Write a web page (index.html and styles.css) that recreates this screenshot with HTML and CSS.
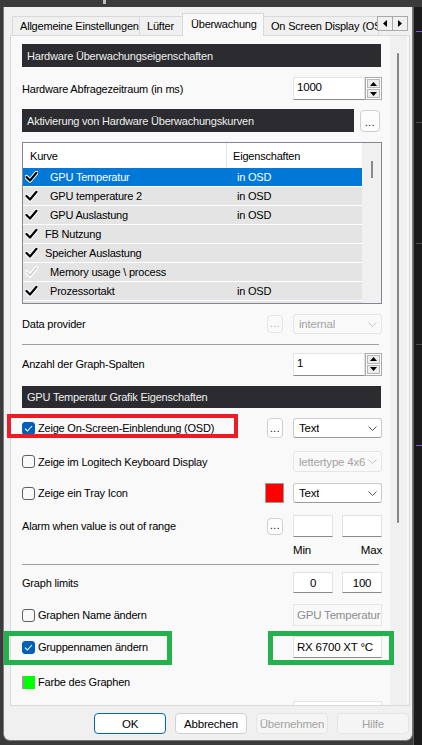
FILE: index.html
```html
<!DOCTYPE html>
<html>
<head>
<meta charset="utf-8">
<title>Überwachung</title>
<link rel="stylesheet" href="styles.css">
</head>
<body>
<div class="titlebar"><span class="tick"></span></div>
<div class="main">
  <div class="dialog">
    <div class="tabs">
      <div class="tab t1">Allgemeine Einstellungen</div>
      <div class="tab t2">Lüfter</div>
      <div class="tab t3 active">Überwachung</div>
      <div class="tab t4">On Screen Display (OS</div>
      <div class="tabarrows">
        <span class="tabarrow"><svg width="4" height="7" viewBox="0 0 4 7"><path d="M4 0 L0 3.5 L4 7Z"/></svg></span>
        <span class="tabarrow"><svg width="4" height="7" viewBox="0 0 4 7"><path d="M0 0 L4 3.5 L0 7Z"/></svg></span>
      </div>
    </div>
    <div class="panel">
      <div class="content">
        <div class="hdr r-hdr1">Hardware Überwachungseigenschaften</div>

        <div class="row r-poll">
          <span class="lbl">Hardware Abfragezeitraum (in ms)</span>
          <div class="spin">
            <span class="field">1000</span>
            <span class="spinbtns">
              <span class="sb"><svg width="7" height="4" viewBox="0 0 7 4"><path d="M0 4 L3.5 0 L7 4Z"/></svg></span>
              <span class="sb"><svg width="7" height="4" viewBox="0 0 7 4"><path d="M0 0 L3.5 4 L7 0Z"/></svg></span>
            </span>
          </div>
        </div>

        <div class="row r-hdr2">
          <div class="hdr hdr-grow">Aktivierung von Hardware Überwachungskurven</div>
          <span class="dots big">...</span>
        </div>

        <div class="list">
          <div class="list-body">
            <div class="list-head"><span class="col1">Kurve</span><span class="col2">Eigenschaften</span></div>
            <div class="item sel">
              <svg class="chk" width="13" height="12" viewBox="0 0 13 12"><path d="M1.5 6 L5 9.5 L11.5 1.8" fill="none" stroke="#fff" stroke-width="4.2" stroke-linecap="round" stroke-linejoin="round"/><path d="M1.5 6 L5 9.5 L11.5 1.8" fill="none" stroke="#000" stroke-width="2.2" stroke-linecap="round" stroke-linejoin="round"/></svg>
              <span class="name">GPU Temperatur</span><span class="prop">in OSD</span>
            </div>
            <div class="item">
              <svg class="chk" width="13" height="12" viewBox="0 0 13 12"><path d="M1.5 6 L5 9.5 L11.5 1.8" fill="none" stroke="#fff" stroke-width="4.2" stroke-linecap="round" stroke-linejoin="round"/><path d="M1.5 6 L5 9.5 L11.5 1.8" fill="none" stroke="#000" stroke-width="2.2" stroke-linecap="round" stroke-linejoin="round"/></svg>
              <span class="name">GPU temperature 2</span><span class="prop">in OSD</span>
            </div>
            <div class="item">
              <svg class="chk" width="13" height="12" viewBox="0 0 13 12"><path d="M1.5 6 L5 9.5 L11.5 1.8" fill="none" stroke="#fff" stroke-width="4.2" stroke-linecap="round" stroke-linejoin="round"/><path d="M1.5 6 L5 9.5 L11.5 1.8" fill="none" stroke="#000" stroke-width="2.2" stroke-linecap="round" stroke-linejoin="round"/></svg>
              <span class="name">GPU Auslastung</span><span class="prop">in OSD</span>
            </div>
            <div class="item">
              <svg class="chk" width="13" height="12" viewBox="0 0 13 12"><path d="M1.5 6 L5 9.5 L11.5 1.8" fill="none" stroke="#fff" stroke-width="4.2" stroke-linecap="round" stroke-linejoin="round"/><path d="M1.5 6 L5 9.5 L11.5 1.8" fill="none" stroke="#000" stroke-width="2.2" stroke-linecap="round" stroke-linejoin="round"/></svg>
              <span class="name shift">FB Nutzung</span><span class="prop"></span>
            </div>
            <div class="item">
              <svg class="chk" width="13" height="12" viewBox="0 0 13 12"><path d="M1.5 6 L5 9.5 L11.5 1.8" fill="none" stroke="#fff" stroke-width="4.2" stroke-linecap="round" stroke-linejoin="round"/><path d="M1.5 6 L5 9.5 L11.5 1.8" fill="none" stroke="#000" stroke-width="2.2" stroke-linecap="round" stroke-linejoin="round"/></svg>
              <span class="name shift">Speicher Auslastung</span><span class="prop"></span>
            </div>
            <div class="item">
              <svg class="chk" width="13" height="12" viewBox="0 0 13 12"><path d="M1.5 6 L5 9.5 L11.5 1.8" fill="none" stroke="#fff" stroke-width="4.2" stroke-linecap="round" stroke-linejoin="round"/><path d="M1.5 6 L5 9.5 L11.5 1.8" fill="none" stroke="#cfcfcf" stroke-width="1.6" stroke-linecap="round" stroke-linejoin="round"/></svg>
              <span class="name">Memory usage \ process</span><span class="prop"></span>
            </div>
            <div class="item">
              <svg class="chk" width="13" height="12" viewBox="0 0 13 12"><path d="M1.5 6 L5 9.5 L11.5 1.8" fill="none" stroke="#fff" stroke-width="4.2" stroke-linecap="round" stroke-linejoin="round"/><path d="M1.5 6 L5 9.5 L11.5 1.8" fill="none" stroke="#000" stroke-width="2.2" stroke-linecap="round" stroke-linejoin="round"/></svg>
              <span class="name">Prozessortakt</span><span class="prop">in OSD</span>
            </div>
            <div class="item">
              <svg class="chk" width="13" height="12" viewBox="0 0 13 12"><path d="M1.5 6 L5 9.5 L11.5 1.8" fill="none" stroke="#fff" stroke-width="4.2" stroke-linecap="round" stroke-linejoin="round"/><path d="M1.5 6 L5 9.5 L11.5 1.8" fill="none" stroke="#000" stroke-width="2.2" stroke-linecap="round" stroke-linejoin="round"/></svg>
            </div>
          </div>
          <div class="list-scroll"><span class="list-thumb"></span></div>
        </div>

        <div class="row r-prov">
          <span class="lbl">Data provider</span>
          <span class="dots small disabled">...</span>
          <div class="select disabled"><span class="val">internal</span><svg width="9" height="5" viewBox="0 0 9 5"><path d="M0.5 0.5 L4.5 4.5 L8.5 0.5" fill="none" stroke="#c4c4c4"/></svg></div>
        </div>

        <div class="sep r-sep1"></div>

        <div class="row r-cols">
          <span class="lbl">Anzahl der Graph-Spalten</span>
          <div class="spin spin-s">
            <span class="field">1</span>
            <span class="spinbtns">
              <span class="sb"><svg width="7" height="4" viewBox="0 0 7 4"><path d="M0 4 L3.5 0 L7 4Z"/></svg></span>
              <span class="sb"><svg width="7" height="4" viewBox="0 0 7 4"><path d="M0 0 L3.5 4 L7 0Z"/></svg></span>
            </span>
          </div>
        </div>

        <div class="hdr r-hdr3">GPU Temperatur Grafik Eigenschaften</div>

        <div class="row r-osd">
          <span class="lbl"><span class="cb checked"><svg width="9" height="7" viewBox="0 0 9 7"><path d="M1 3.6 L3.4 6 L8 1" fill="none" stroke="#fff" stroke-width="1.1"/></svg></span>Zeige On-Screen-Einblendung (OSD)</span>
          <span class="dots mid">...</span>
          <div class="select"><span class="val">Text</span><svg width="9" height="5" viewBox="0 0 9 5"><path d="M0.5 0.5 L4.5 4.5 L8.5 0.5" fill="none" stroke="#555"/></svg></div>
        </div>

        <div class="row r-logi">
          <span class="lbl"><span class="cb"></span>Zeige im Logitech Keyboard Display</span>
          <div class="select disabled"><span class="val">lettertype 4x6</span><svg width="9" height="5" viewBox="0 0 9 5"><path d="M0.5 0.5 L4.5 4.5 L8.5 0.5" fill="none" stroke="#c4c4c4"/></svg></div>
        </div>

        <div class="row r-tray">
          <span class="lbl"><span class="cb"></span>Zeige ein Tray Icon</span>
          <span class="swatch-red"></span>
          <div class="select"><span class="val">Text</span><svg width="9" height="5" viewBox="0 0 9 5"><path d="M0.5 0.5 L4.5 4.5 L8.5 0.5" fill="none" stroke="#555"/></svg></div>
        </div>

        <div class="row r-alarm">
          <span class="lbl">Alarm when value is out of range</span>
          <span class="dots tiny">...</span>
          <span class="box"></span>
          <span class="box gapl"></span>
        </div>
        <div class="row r-minmax">
          <span class="lbl"></span>
          <span class="mm">Min</span>
          <span class="mm right">Max</span>
        </div>

        <div class="sep r-sep2"></div>

        <div class="row r-limits">
          <span class="lbl">Graph limits</span>
          <span class="box num">0</span>
          <span class="box num gapl">100</span>
        </div>

        <div class="row r-gname">
          <span class="lbl"><span class="cb"></span>Graphen Name ändern</span>
          <span class="input disabled">GPU Temperatur</span>
        </div>

        <div class="row r-grp">
          <span class="lbl"><span class="cb checked"><svg width="9" height="7" viewBox="0 0 9 7"><path d="M1 3.6 L3.4 6 L8 1" fill="none" stroke="#fff" stroke-width="1.1"/></svg></span>Gruppennamen ändern</span>
          <span class="input">RX 6700 XT °C</span>
        </div>

        <div class="row r-color">
          <span class="lbl"><span class="swatch-green"></span>Farbe des Graphen</span>
        </div>

        <div class="row r-next">
          <span class="lbl"></span>
          <span class="input"></span>
        </div>
      </div>
      <div class="vscroll"><span class="vthumb"></span></div>
    </div>
    <div class="buttons">
      <span class="btn default">OK</span>
      <span class="btn">Abbrechen</span>
      <span class="btn disabled">Übernehmen</span>
      <span class="btn disabled">Hilfe</span>
    </div>
  </div>
  <div class="side">
    <span class="side-line purple"></span>
    <span class="side-line s2"></span>
    <span class="side-line s3"></span>
    <span class="side-line s4"></span>
    <span class="side-line purple s5"></span>
  </div>
</div>

<div class="mark mark-red"></div>
<div class="mark mark-green1"></div>
<div class="mark mark-green2"></div>
</body>
</html>
```
FILE: styles.css
```css
* { box-sizing: border-box; }
html, body { margin: 0; padding: 0; }
body {
  width: 422px;
  height: 745px;
  overflow: hidden;
  background: #1e1e1e;
  font-family: "Liberation Sans", Arial, sans-serif;
  font-size: 11px;
  letter-spacing: -0.2px;
  color: #000;
  position: relative;
}

.titlebar { height: 7px; background: #3b3b3b; display: flex; }
.tick { width: 3px; height: 4px; background: #bdbdbd; margin-left: 103px; margin-top: 0; }

.main { display: flex; padding-left: 3px; background: #3b3b3b; height: 738px; }

.dialog {
  width: 410px;
  height: 734px;
  background: #f0f0f0;
  border-left: 1px solid #7a7a7a;
  border-right: 1px solid #7a7a7a;
  border-bottom: 1px solid #7a7a7a;
  border-radius: 0 0 7px 7px;
  padding-left: 6px;
  display: flex;
  flex-direction: column;
}

/* Tabs */
.tabs { display: flex; align-items: flex-end; height: 22px; margin-top: 6px; padding-left: 2px; position: relative; }
.tab {
  height: 19px;
  border: 1px solid #d9d9d9;
  border-bottom: none;
  margin-right: -1px;
  background: #f0f0f0;
  line-height: 18px;
  white-space: nowrap;
  overflow: hidden;
  padding-left: 7px;
}
.t1 { width: 128px; }
.t2 { width: 44px; }
.t3 { width: 82px; }
.t4 { width: 116px; }
.tab.active { height: 23px; margin-bottom: -1px; background: #f9f9f9; position: relative; z-index: 1; line-height: 20px; padding-left: 8px; }
.tabarrows { display: flex; align-self: flex-start; margin-top: 3px; margin-left: -1px; position: relative; z-index: 2; }
.tabarrow {
  width: 16px; height: 15px;
  border: 1px solid #a9a9a9;
  background: #f0f0f0;
  display: flex; align-items: center; justify-content: center;
  margin-right: -1px;
}
.tabarrow svg { fill: #000; }

/* Panel */
.panel {
  width: 400px;
  height: 671px;
  border: 1px solid #d9d9d9;
  background: #f9f9f9;
  display: flex;
}
.content { width: 379px; height: 669px; overflow: hidden; padding: 0 8px 0 11px; }
.vscroll { width: 17px; height: 669px; background: #f0f0f0; padding-top: 17px; padding-left: 7px; }
.vthumb { display: block; width: 2px; height: 470px; background: #858585; border-radius: 1px; }

/* Generic rows */
.row { display: flex; align-items: center; }
.lbl { flex: 1; display: flex; align-items: center; white-space: nowrap; }

.hdr { background: #2c2c30; color: #efefef; height: 23px; display: flex; align-items: center; padding-left: 5px; margin-right: 1px; }
.hdr-grow { flex: 1; margin-right: 0; }

.r-hdr1 { margin-top: 8px; }
.r-poll { margin-top: 10px; height: 23px; }
.r-hdr2 { margin-top: 9px; height: 23px; }
.list { margin-top: 10px; }
.r-prov { margin-top: 10px; height: 20px; }
.r-sep1 { margin-top: 10px; }
.r-cols { margin-top: 8px; height: 22px; }
.r-hdr3 { margin-top: 11px; height: 22px; }
.r-osd { margin-top: 10px; height: 20px; }
.r-logi { margin-top: 13px; height: 21px; }
.r-tray { margin-top: 11px; height: 20px; }
.r-alarm { margin-top: 12px; height: 22px; }
.r-minmax { margin-top: 6px; height: 14px; }
.r-sep2 { margin-top: 7px; }
.r-limits { margin-top: 7px; height: 21px; }
.r-gname { margin-top: 11px; height: 22px; }
.r-grp { margin-top: 10px; height: 22px; }
.r-color { margin-top: 17px; height: 14px; }
.r-next { margin-top: 12px; height: 22px; }

.sep { height: 1px; background: #a0a0a0; margin-right: 3px; }

/* Spin boxes */
.spin { display: flex; width: 89px; height: 23px; }
.spin .field {
  flex: 1;
  background: #fff;
  border: 1px solid #e3e3e3;
  border-bottom: 1px solid #8a8a8a;
  padding: 3px 0 0 3px;
  font-size: 11.5px;
}
.spinbtns { width: 17px; display: flex; flex-direction: column; border: 1px solid #a9a9a9; background: #fff; padding: 1px; gap: 1px; }
.sb { flex: 1; background: #ececec; border: 1px solid #b5b5b5; display: flex; align-items: center; justify-content: center; }
.sb svg { fill: #000; }

/* "..." buttons */
.dots {
  display: flex; align-items: flex-end; justify-content: center;
  border: 1px solid #cfcfcf;
  border-radius: 4px;
  background: #fdfdfd;
  font-size: 10px;
  line-height: 1;
  padding-bottom: 3px;
  letter-spacing: 0.5px;
}
.dots.big { width: 20px; height: 22px; margin-left: 6px; margin-right: 2px; }
.dots.small { width: 16px; height: 18px; margin-right: 10px; }
.dots.mid { width: 16px; height: 20px; margin-right: 10px; }
.dots.tiny { width: 16px; height: 17px; margin-right: 10px; }
.dots.disabled { color: #a8a8a8; border-color: #e6e6e6; background: #f9f9f9; }

/* Selects */
.select {
  width: 89px; height: 100%;
  display: flex; align-items: center; justify-content: space-between;
  background: #fff;
  border: 1px solid #cccccc;
  border-bottom-color: #9a9a9a;
  border-radius: 3px;
  padding: 0 4px 0 5px;
  font-size: 11.5px;
  white-space: nowrap;
}
.select .val { white-space: nowrap; overflow: hidden; }
.select svg { flex: none; }
.select.disabled { background: #f9f9f9; border-color: #e6e6e6; color: #a3a3a3; }

/* Checkboxes */
.cb {
  width: 13px; height: 13px;
  flex: none;
  border: 1px solid #5f5f5f;
  border-radius: 3px;
  background: #f9f9f9;
  margin-right: 3px;
  display: inline-flex; align-items: center; justify-content: center;
}
.cb.checked { background: #005fb8; border-color: #005fb8; }

.swatch-red { width: 19px; height: 20px; background: #ff0000; border: 1px solid #9a9a9a; margin-right: 9px; }
.swatch-green { width: 13px; height: 13px; background: #00ff00; border-left: 2px solid #9a9a9a; margin-right: 3px; }

/* Small boxes */
.box {
  width: 40px; height: 100%;
  background: #fff;
  border: 1px solid #e3e3e3;
  border-bottom-color: #8a8a8a;
  display: flex; align-items: center; justify-content: center;
  font-size: 11.5px;
}
.box.gapl { margin-left: 9px; }

.mm { width: 40px; font-size: 11.5px; }
.mm.right { margin-left: 9px; text-align: right; }

.input {
  width: 89px; height: 100%;
  background: #fff;
  border: 1px solid #e3e3e3;
  border-bottom-color: #8a8a8a;
  display: flex; align-items: center;
  padding-left: 3px;
  font-size: 11.5px;
  white-space: nowrap;
  overflow: hidden;
}
.input.disabled { background: #f9f9f9; border-color: #e6e6e6; color: #8d8d8d; }

/* List */
.list { display: flex; height: 162px; border: 1px solid #828790; background: #fff; margin-right: 0; }
.list-body { width: 339px; overflow: hidden; }
.list-scroll { flex: 1; background: #f0f0f0; padding: 18px 0 0 9px; }
.list-thumb { display: block; width: 2px; height: 17px; background: #8a8a8a; }
.list-head { height: 25px; display: flex; align-items: center; background: #fff; }
.col1 { width: 204px; height: 100%; display: flex; align-items: center; padding-left: 7px; border-right: 1px solid #e5e5e5; }
.col2 { padding-left: 6px; }
.item { height: 19px; display: flex; align-items: center; background: #e4e4e4; border-bottom: 1px solid #fff; padding-left: 2px; }
.item.sel { background: #0078d7; color: #fff; }
.chk { flex: none; }
.name { width: 187px; margin-left: 12px; white-space: nowrap; }
.name.shift { margin-left: 7px; width: 192px; }
.prop { white-space: nowrap; }

/* Buttons */
.buttons { display: flex; justify-content: flex-end; gap: 9px; margin-top: 7px; height: 21px; padding-right: 3px; }
.btn {
  width: 72px; height: 21px;
  display: flex; align-items: center; justify-content: center;
  border: 1px solid #d0d0d0;
  border-radius: 4px;
  background: #fdfdfd;
  font-size: 11.5px;
}
.btn.default { border-color: #0067c0; background: #fff; }
.btn.disabled { color: #a3a3a3; border-color: #e5e5e5; background: #f5f5f5; }

/* Side strip (background window) */
.side { flex: 1; background: #1b1b1b; border-left: 1px solid #5c5c5c; display: flex; flex-direction: column; }
.side-line { display: block; height: 1px; background: #4a4a4a; margin-left: 2px; }
.side-line.purple { background: #7b5bd6; margin-top: 24px; }
.side-line.s2 { margin-top: 90px; }
.side-line.s3 { margin-top: 120px; }
.side-line.s4 { margin-top: 100px; }
.side-line.s5 { margin-top: 100px; }

/* Annotation overlays */
.mark { position: absolute; pointer-events: none; }
.mark-red { left: 7px; top: 414px; width: 231px; height: 24px; border: 4px solid #ed1c24; }
.mark-green1 { left: 4px; top: 631px; width: 168px; height: 34px; border: 5px solid #22b14c; }
.mark-green2 { left: 268px; top: 631px; width: 126px; height: 34px; border: 5px solid #22b14c; }
```
